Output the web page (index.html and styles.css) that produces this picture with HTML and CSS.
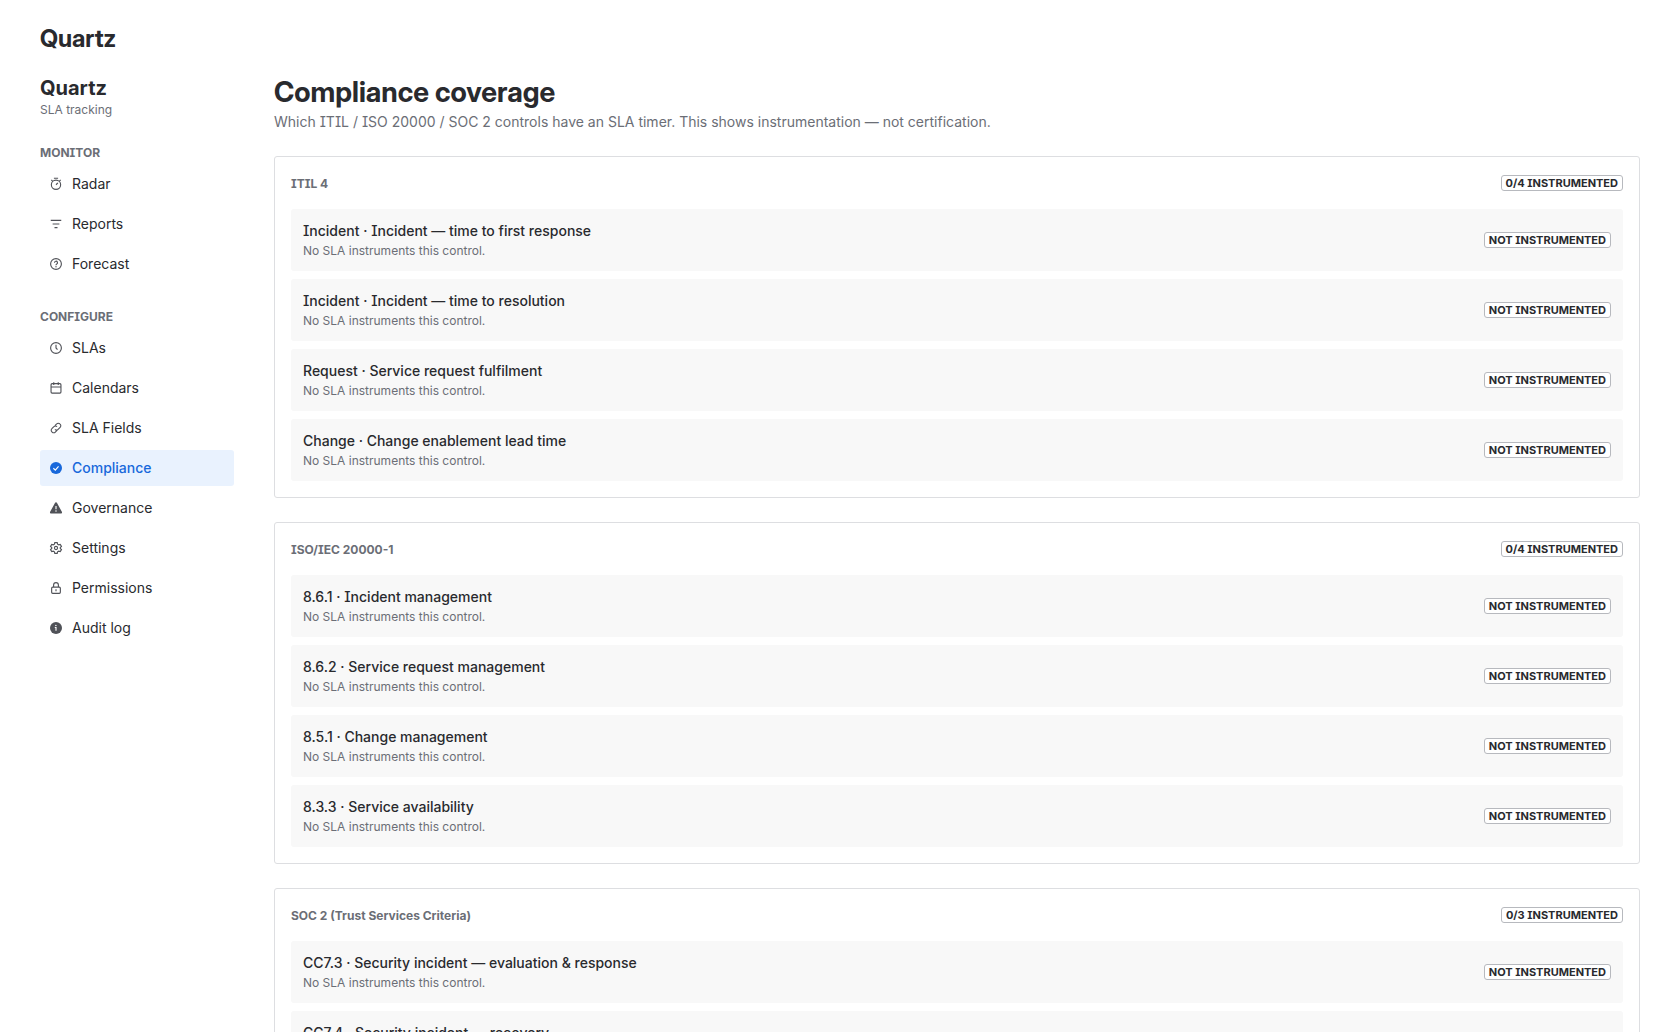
FILE: index.html
```
<!DOCTYPE html>
<html lang="en">

<head>
    <meta charset="UTF-8">
    <meta name="viewport" content="width=device-width, initial-scale=1.0">
    <title>Quartz - Compliance coverage</title>
    <link rel="stylesheet" href="styles.css">
</head>

<body>
    <header class="app-header">Quartz</header>

    <div class="layout">
        <aside class="sidebar">
            <div class="brand">
                <h2>Quartz</h2>
                <p>SLA tracking</p>
            </div>

            <nav class="nav-section" aria-labelledby="nav-monitor">
                <h3 id="nav-monitor">MONITOR</h3>
                <ul>
                    <li><a class="nav-item" href="#radar">
                        <svg class="icon" viewBox="0 0 16 16"><circle cx="8" cy="9" r="6.2"/><path d="M5.2 .4h5.6M12.6 4.2l1.6-1.6M3.4 4.2L1.8 2.6M8 9l2.5-2.5"/></svg>
                        Radar</a></li>
                    <li><a class="nav-item" href="#reports">
                        <svg class="icon" viewBox="0 0 16 16"><path d="M1 3.2h14M3.5 8h9M6 12.8h4"/></svg>
                        Reports</a></li>
                    <li><a class="nav-item" href="#forecast">
                        <svg class="icon" viewBox="0 0 16 16"><circle cx="8" cy="8" r="7.2"/><path d="M6 6.3a2 2 0 1 1 3 1.7c-.7.4-1 .7-1 1.5"/><circle class="fill" cx="8" cy="11.6" r=".9"/></svg>
                        Forecast</a></li>
                </ul>
            </nav>

            <nav class="nav-section" aria-labelledby="nav-configure">
                <h3 id="nav-configure">CONFIGURE</h3>
                <ul>
                    <li><a class="nav-item" href="#slas">
                        <svg class="icon" viewBox="0 0 16 16"><circle cx="8" cy="8" r="7.2"/><path d="M8 3.5V8l2 2.2"/></svg>
                        SLAs</a></li>
                    <li><a class="nav-item" href="#calendars">
                        <svg class="icon" viewBox="0 0 16 16"><rect x="1.4" y="2.2" width="13.2" height="12.6" rx="1.4"/><path d="M1.4 6.6h13.2M5 .3v3.8M11 .3v3.8"/></svg>
                        Calendars</a></li>
                    <li><a class="nav-item" href="#fields">
                        <svg class="icon" viewBox="0 0 16 16"><path d="M6.6 4.8l2.3-2.3a2.9 2.9 0 0 1 4.2 0l.4.4a2.9 2.9 0 0 1 0 4.2l-2.7 2.7a2.9 2.9 0 0 1-4.2 0M9.4 11.2l-2.3 2.3a2.9 2.9 0 0 1-4.2 0l-.4-.4a2.9 2.9 0 0 1 0-4.2l2.7-2.7a2.9 2.9 0 0 1 4.2 0"/></svg>
                        SLA Fields</a></li>
                    <li><a class="nav-item active" href="#compliance" aria-current="page">
                        <svg class="icon" viewBox="0 0 16 16"><circle class="fill" cx="8" cy="8" r="8"/><path class="knockout" d="M4.5 8.3l2.6 2.5 4.3-5"/></svg>
                        Compliance</a></li>
                    <li><a class="nav-item" href="#governance">
                        <svg class="icon" viewBox="0 0 16 16"><path class="fill" d="M6.6 1.2a1.6 1.6 0 0 1 2.8 0l6.4 11.9a1.5 1.5 0 0 1-1.3 2.3h-13a1.5 1.5 0 0 1-1.3-2.3z"/><path class="knockout" d="M8 5.2v4.3"/><circle class="dot" cx="8" cy="12" r="1"/></svg>
                        Governance</a></li>
                    <li><a class="nav-item" href="#settings">
                        <svg class="icon" viewBox="0 0 16 16"><path d="M6.4.8h3.2l.5 2.1 1.5.9 2.1-.6 1.6 2.7L13.7 7.3v1.4l1.6 1.4-1.6 2.7-2.1-.6-1.5.9-.5 2.1H6.4l-.5-2.1-1.5-.9-2.1.6-1.6-2.7 1.6-1.4V7.3L.7 5.9l1.6-2.7 2.1.6 1.5-.9z"/><circle cx="8" cy="8" r="2.1"/></svg>
                        Settings</a></li>
                    <li><a class="nav-item" href="#permissions">
                        <svg class="icon" viewBox="0 0 16 16"><rect x="2.2" y="6.8" width="11.6" height="8.4" rx="1.4"/><path d="M4.8 6.8V4a3.2 3.2 0 0 1 6.4 0v2.8M8 9.8v2.4"/></svg>
                        Permissions</a></li>
                    <li><a class="nav-item" href="#audit">
                        <svg class="icon" viewBox="0 0 16 16"><circle class="fill" cx="8" cy="8" r="8"/><path class="knockout" d="M6.4 7.3H8v4.4"/><circle class="dot" cx="7.8" cy="4.5" r="1"/></svg>
                        Audit log</a></li>
                </ul>
            </nav>
        </aside>

        <main class="content">
            <div class="page-title">
                <h1>Compliance coverage</h1>
                <p>Which ITIL / ISO 20000 / SOC 2 controls have an SLA timer. This shows instrumentation — not certification.</p>
            </div>

            <section class="card">
                <div class="card-header">
                    <h2>ITIL 4</h2>
                    <span class="badge">0/4 INSTRUMENTED</span>
                </div>
                <ul class="controls">
                    <li class="control">
                        <div>
                            <h3>Incident · Incident — time to first response</h3>
                            <p>No SLA instruments this control.</p>
                        </div>
                        <span class="badge">NOT INSTRUMENTED</span>
                    </li>
                    <li class="control">
                        <div>
                            <h3>Incident · Incident — time to resolution</h3>
                            <p>No SLA instruments this control.</p>
                        </div>
                        <span class="badge">NOT INSTRUMENTED</span>
                    </li>
                    <li class="control">
                        <div>
                            <h3>Request · Service request fulfilment</h3>
                            <p>No SLA instruments this control.</p>
                        </div>
                        <span class="badge">NOT INSTRUMENTED</span>
                    </li>
                    <li class="control">
                        <div>
                            <h3>Change · Change enablement lead time</h3>
                            <p>No SLA instruments this control.</p>
                        </div>
                        <span class="badge">NOT INSTRUMENTED</span>
                    </li>
                </ul>
            </section>

            <section class="card">
                <div class="card-header">
                    <h2>ISO/IEC 20000-1</h2>
                    <span class="badge">0/4 INSTRUMENTED</span>
                </div>
                <ul class="controls">
                    <li class="control">
                        <div>
                            <h3>8.6.1 · Incident management</h3>
                            <p>No SLA instruments this control.</p>
                        </div>
                        <span class="badge">NOT INSTRUMENTED</span>
                    </li>
                    <li class="control">
                        <div>
                            <h3>8.6.2 · Service request management</h3>
                            <p>No SLA instruments this control.</p>
                        </div>
                        <span class="badge">NOT INSTRUMENTED</span>
                    </li>
                    <li class="control">
                        <div>
                            <h3>8.5.1 · Change management</h3>
                            <p>No SLA instruments this control.</p>
                        </div>
                        <span class="badge">NOT INSTRUMENTED</span>
                    </li>
                    <li class="control">
                        <div>
                            <h3>8.3.3 · Service availability</h3>
                            <p>No SLA instruments this control.</p>
                        </div>
                        <span class="badge">NOT INSTRUMENTED</span>
                    </li>
                </ul>
            </section>

            <section class="card">
                <div class="card-header">
                    <h2>SOC 2 (Trust Services Criteria)</h2>
                    <span class="badge">0/3 INSTRUMENTED</span>
                </div>
                <ul class="controls">
                    <li class="control">
                        <div>
                            <h3>CC7.3 · Security incident — evaluation &amp; response</h3>
                            <p>No SLA instruments this control.</p>
                        </div>
                        <span class="badge">NOT INSTRUMENTED</span>
                    </li>
                    <li class="control">
                        <div>
                            <h3>CC7.4 · Security incident — recovery</h3>
                            <p>No SLA instruments this control.</p>
                        </div>
                        <span class="badge">NOT INSTRUMENTED</span>
                    </li>
                </ul>
            </section>
        </main>
    </div>
</body>

</html>
```

FILE: styles.css
```
* {
    box-sizing: border-box;
    margin: 0;
    padding: 0;
}

body {
    padding: 24px 40px;
    font-family: Inter, "Liberation Sans", sans-serif;
    font-feature-settings: "cv08";
    font-size: 14px;
    line-height: 20px;
    color: #292a2e;
    background: #fff;
}

ul {
    list-style: none;
}

.app-header {
    margin-bottom: 22px;
    font-family: "Inter Display", Inter, "Liberation Sans", sans-serif;
    font-size: 24px;
    line-height: 30px;
    font-weight: 700;
}

.layout {
    display: grid;
    grid-template-columns: 194px 1fr;
    gap: 40px;
}

/* sidebar */
.sidebar,
.content {
    display: flex;
    flex-direction: column;
    gap: 24px;
}

.brand h2 {
    margin-bottom: 2px;
    font-size: 20px;
    line-height: 24px;
    font-weight: 700;
}

.brand p,
.control p {
    font-size: 12px;
    line-height: 16px;
    color: #6b6e76;
}

.nav-section h3 {
    margin-bottom: 2px;
    font-size: 12px;
    line-height: 22px;
    font-weight: 700;
    color: #6b6e76;
}

.nav-section ul {
    display: flex;
    flex-direction: column;
    gap: 4px;
}

.nav-item {
    display: flex;
    align-items: center;
    gap: 10px;
    padding: 8px 10px;
    border-radius: 3px;
    color: #292a2e;
    text-decoration: none;
}

.nav-item:hover {
    background: #f0f1f2;
}

.nav-item.active {
    background: #e9f2fe;
    color: #1868db;
    font-weight: 500;
}

.icon {
    width: 12px;
    height: 12px;
    overflow: visible;
    fill: none;
    stroke: #505258;
    stroke-width: 1.5;
}

.icon .fill {
    fill: #505258;
    stroke: none;
}

.icon .dot {
    fill: #fff;
    stroke: none;
}

.icon .knockout {
    stroke: #fff;
}

.active .icon .fill {
    fill: #1868db;
}

/* content */
.page-title h1 {
    margin-bottom: 4px;
    font-family: "Inter Display", Inter, "Liberation Sans", sans-serif;
    font-size: 28px;
    line-height: 32px;
    font-weight: 700;
}

.page-title p {
    color: #6b6e76;
}

.card {
    padding: 16px;
    border: 1px solid #dddee1;
    border-radius: 3px;
}

.card-header {
    display: flex;
    align-items: flex-start;
    justify-content: space-between;
    margin-bottom: 14px;
}

.card-header h2 {
    font-size: 12px;
    line-height: 22px;
    font-weight: 700;
    color: #6b6e76;
}

.controls {
    display: flex;
    flex-direction: column;
    gap: 8px;
}

.control {
    display: flex;
    align-items: center;
    justify-content: space-between;
    padding: 12px;
    border-radius: 3px;
    background: #f8f8f8;
}

.control h3 {
    margin-bottom: 2px;
    font-size: 14px;
    line-height: 20px;
    font-weight: 500;
}

.badge {
    margin: 2px 0;
    padding: 0 4px;
    border: 1px solid #b7b9be;
    border-radius: 3px;
    background: #fff;
    font-size: 11px;
    line-height: 14px;
    font-weight: 700;
}
```
